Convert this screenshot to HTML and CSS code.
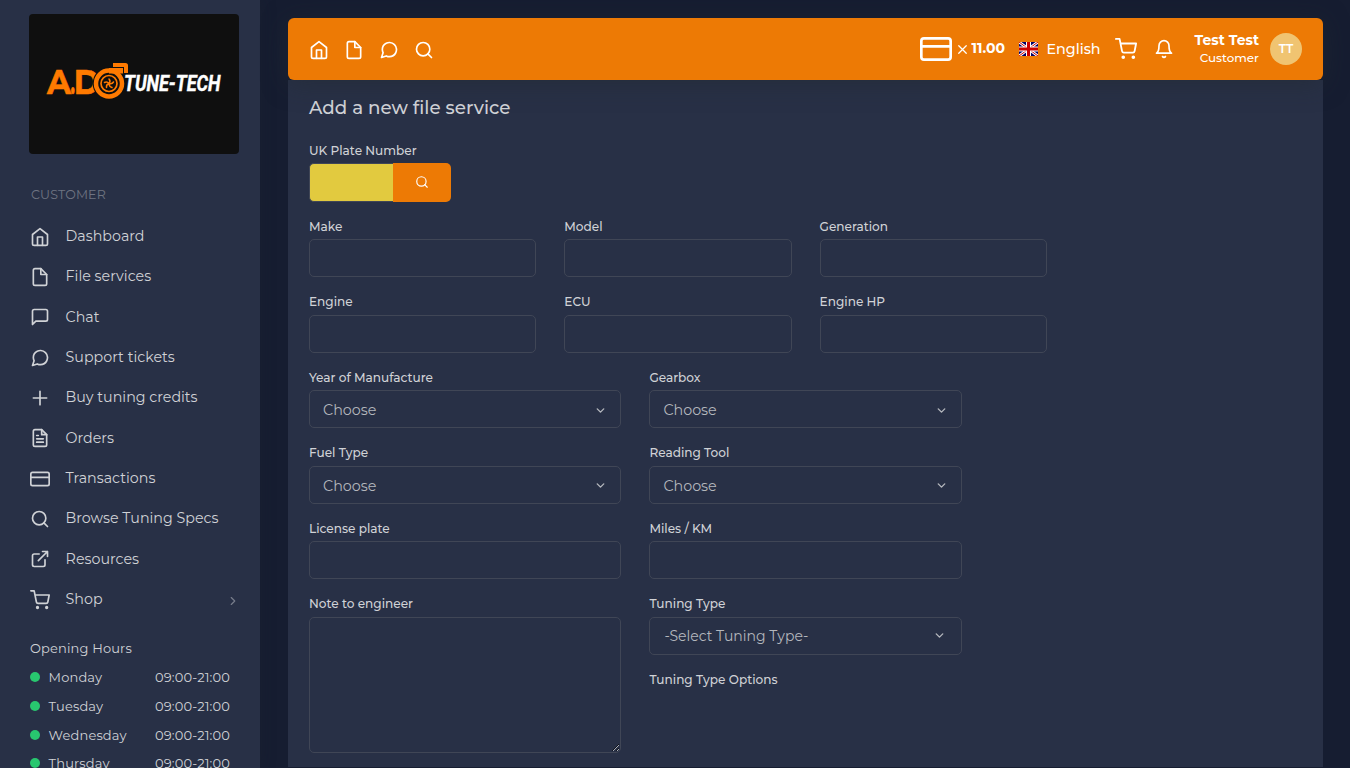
FILE: index.html
```html
<!DOCTYPE html>
<html lang="en">
<head>
    <meta charset="utf-8" />
    <title>Add a new file service</title>
    <link rel="stylesheet" href="styles.css">
</head>
<body>
    <!-- icon set -->
    <svg class="sprite" aria-hidden="true">
        <symbol id="i-home" viewBox="0 0 24 24"><path d="M3 9l9-7 9 7v11a2 2 0 0 1-2 2H5a2 2 0 0 1-2-2z"/><path d="M9 22V12h6v10"/></symbol>
        <symbol id="i-file" viewBox="0 0 24 24"><path d="M13 2H6a2 2 0 0 0-2 2v16a2 2 0 0 0 2 2h12a2 2 0 0 0 2-2V9z"/><path d="M13 2v7h7"/></symbol>
        <symbol id="i-chat" viewBox="0 0 24 24"><path d="M21 15a2 2 0 0 1-2 2H7l-4 4V5a2 2 0 0 1 2-2h14a2 2 0 0 1 2 2z"/></symbol>
        <symbol id="i-ticket" viewBox="0 0 24 24"><path d="M21 11.5a8.38 8.38 0 0 1-.9 3.8 8.5 8.5 0 0 1-7.6 4.7 8.38 8.38 0 0 1-3.8-.9L3 21l1.9-5.7a8.38 8.38 0 0 1-.9-3.8 8.5 8.5 0 0 1 4.7-7.6 8.38 8.38 0 0 1 3.8-.9h.5a8.48 8.48 0 0 1 8 8v.5z"/></symbol>
        <symbol id="i-plus" viewBox="0 0 24 24"><path d="M12 4v16M4 12h16"/></symbol>
        <symbol id="i-text" viewBox="0 0 24 24"><path d="M14 2H6a2 2 0 0 0-2 2v16a2 2 0 0 0 2 2h12a2 2 0 0 0 2-2V8z"/><path d="M14 2v6h6M16 13H8M16 17H8M10 9H8"/></symbol>
        <symbol id="i-card" viewBox="0 0 24 24"><rect x="1" y="4" width="22" height="16" rx="2"/><path d="M1 10h22"/></symbol>
        <symbol id="i-search" viewBox="0 0 24 24"><circle cx="11" cy="11" r="8"/><path d="M21 21l-4.35-4.35"/></symbol>
        <symbol id="i-link" viewBox="0 0 24 24"><path d="M18 13v6a2 2 0 0 1-2 2H5a2 2 0 0 1-2-2V8a2 2 0 0 1 2-2h6M15 3h6v6M10 14L21 3"/></symbol>
        <symbol id="i-cart" viewBox="0 0 24 24"><circle cx="9" cy="21" r="1"/><circle cx="20" cy="21" r="1"/><path d="M1 1h4l2.68 13.39a2 2 0 0 0 2 1.61h9.72a2 2 0 0 0 2-1.61L23 6H6"/></symbol>
        <symbol id="i-bell" viewBox="0 0 24 24"><path d="M18 8A6 6 0 0 0 6 8c0 7-3 9-3 9h18s-3-2-3-9M13.73 21a2 2 0 0 1-3.46 0"/></symbol>
        <symbol id="i-right" viewBox="0 0 24 24"><path d="M9 18l6-6-6-6"/></symbol>
        <symbol id="i-down" viewBox="0 0 24 24"><path d="M6 9l6 6 6-6"/></symbol>
        <symbol id="i-x" viewBox="0 0 24 24"><path d="M18 6L6 18M6 6l12 12"/></symbol>
    </svg>

    <div class="wrapper">
        <aside class="sidebar">
            <svg class="logo" viewBox="0 0 210 140">
                <rect width="210" height="140" rx="4" fill="#0f0f0f"/>
                <g class="logo-ad">
                    <text x="18" y="79.500" textLength="24" lengthAdjust="spacingAndGlyphs">A</text>
                    <text x="41.500" y="79.500" textLength="4.500" lengthAdjust="spacingAndGlyphs">.</text>
                    <text x="44.700" y="79.500" textLength="26" lengthAdjust="spacingAndGlyphs">D</text>
                </g>
                <circle cx="80" cy="69.500" r="16.300" fill="#0f0f0f"/>
                <path fill="#ff7a00" d="M80 54H94V59.500H80zM84 49H96.500Q99 49 99 51.500V59H95V53H84z"/>
                <circle cx="80" cy="69.500" r="13" fill="none" stroke="#ff7a00" stroke-width="4.500"/>
                <circle cx="80" cy="69.500" r="8" fill="none" stroke="#ff7a00" stroke-width="1.700"/>
                <g fill="none" stroke="#ff7a00" stroke-width="1.500" stroke-linecap="round">
                    <path d="M80 69.500Q82 67 80 65M80 69.500Q83 70.500 84.500 68M80 69.500Q80 72.500 83 73.500M80 69.500Q77 70.500 77.500 73.500M80 69.500Q78 67 75.500 68.500"/>
                </g>
                <text class="logo-tt" x="95" y="76.500" textLength="96.500" lengthAdjust="spacingAndGlyphs">TUNE-TECH</text>
            </svg>

            <div class="menu-title">CUSTOMER</div>
            <nav class="menu">
                <a><svg class="icon"><use href="#i-home"/></svg><span>Dashboard</span></a>
                <a><svg class="icon"><use href="#i-file"/></svg><span>File services</span></a>
                <a><svg class="icon"><use href="#i-chat"/></svg><span>Chat</span></a>
                <a><svg class="icon"><use href="#i-ticket"/></svg><span>Support tickets</span></a>
                <a><svg class="icon"><use href="#i-plus"/></svg><span>Buy tuning credits</span></a>
                <a><svg class="icon"><use href="#i-text"/></svg><span>Orders</span></a>
                <a><svg class="icon"><use href="#i-card"/></svg><span>Transactions</span></a>
                <a><svg class="icon"><use href="#i-search"/></svg><span>Browse Tuning Specs</span></a>
                <a><svg class="icon"><use href="#i-link"/></svg><span>Resources</span></a>
                <a><svg class="icon"><use href="#i-cart"/></svg><span>Shop</span><svg class="icon arrow"><use href="#i-right"/></svg></a>
            </nav>

            <div class="hours">
                <div class="hours-title">Opening Hours</div>
                <div class="day"><i class="dot"></i><span>Monday</span><span class="time">09:00-21:00</span></div>
                <div class="day"><i class="dot"></i><span>Tuesday</span><span class="time">09:00-21:00</span></div>
                <div class="day"><i class="dot"></i><span>Wednesday</span><span class="time">09:00-21:00</span></div>
                <div class="day"><i class="dot"></i><span>Thursday</span><span class="time">09:00-21:00</span></div>
            </div>
        </aside>

        <main class="content">
            <header class="navbar">
                <div class="shortcuts">
                    <svg class="icon"><use href="#i-home"/></svg>
                    <svg class="icon"><use href="#i-file"/></svg>
                    <svg class="icon"><use href="#i-ticket"/></svg>
                    <svg class="icon"><use href="#i-search"/></svg>
                </div>
                <div class="credits">
                    <svg class="icon credit-card"><use href="#i-card"/></svg>
                    <svg class="icon times"><use href="#i-x"/></svg>
                    <b>11.00</b>
                </div>
                <div class="language">
                    <svg class="flag" viewBox="0 0 19 14">
                        <rect width="19" height="14" fill="#006"/>
                        <path d="M0 0L19 14M19 0L0 14" stroke="#fff" stroke-width="2.800"/>
                        <path d="M0 0L19 14M19 0L0 14" stroke="#c00" stroke-width="1"/>
                        <path d="M9.500 0V14M0 7H19" stroke="#fff" stroke-width="5"/>
                        <path d="M9.500 0V14M0 7H19" stroke="#c00" stroke-width="3"/>
                    </svg>
                    <span>English</span>
                </div>
                <svg class="icon cart"><use href="#i-cart"/></svg>
                <svg class="icon bell"><use href="#i-bell"/></svg>
                <div class="user">
                    <b>Test Test</b>
                    <span>Customer</span>
                </div>
                <div class="avatar">TT</div>
            </header>

            <section class="card">
                <h4>Add a new file service</h4>
                <form>
                    <div class="field">
                        <label>UK Plate Number</label>
                        <div class="plate">
                            <input class="plate-input" type="text">
                            <button class="plate-button" type="button"><svg class="icon"><use href="#i-search"/></svg></button>
                        </div>
                    </div>

                    <div class="row three">
                        <div class="field"><label>Make</label><input class="control" type="text"></div>
                        <div class="field"><label>Model</label><input class="control" type="text"></div>
                        <div class="field"><label>Generation</label><input class="control" type="text"></div>
                        <div class="field"><label>Engine</label><input class="control" type="text"></div>
                        <div class="field"><label>ECU</label><input class="control" type="text"></div>
                        <div class="field"><label>Engine HP</label><input class="control" type="text"></div>
                    </div>

                    <div class="row two">
                        <div class="field"><label>Year of Manufacture</label><div class="control select"><span>Choose</span><svg class="icon"><use href="#i-down"/></svg></div></div>
                        <div class="field"><label>Gearbox</label><div class="control select"><span>Choose</span><svg class="icon"><use href="#i-down"/></svg></div></div>
                        <div class="field"><label>Fuel Type</label><div class="control select"><span>Choose</span><svg class="icon"><use href="#i-down"/></svg></div></div>
                        <div class="field"><label>Reading Tool</label><div class="control select"><span>Choose</span><svg class="icon"><use href="#i-down"/></svg></div></div>
                        <div class="field"><label>License plate</label><input class="control" type="text"></div>
                        <div class="field"><label>Miles / KM</label><input class="control" type="text"></div>
                        <div class="field"><label>Note to engineer</label><textarea class="control note"></textarea></div>
                        <div>
                            <div class="field"><label>Tuning Type</label><div class="control select tuning"><span>-Select Tuning Type-</span><svg class="icon"><use href="#i-down"/></svg></div></div>
                            <div class="field"><label>Tuning Type Options</label></div>
                        </div>
                    </div>
                </form>
            </section>
        </main>
    </div>
</body>
</html>
```
FILE: styles.css
```css
* {
    box-sizing: border-box;
}

body {
    margin: 0;
    height: 768px;
    overflow: hidden;
    background-color: #161d31;
    color: #d0d2d6;
    font-family: Montserrat, Inter, sans-serif;
    font-size: 14px;
}

.sprite {
    display: none;
}

.icon {
    width: 20px;
    height: 20px;
    flex: none;
    fill: none;
    stroke: currentColor;
    stroke-width: 2;
    stroke-linecap: round;
    stroke-linejoin: round;
}

.wrapper {
    display: flex;
    height: 768px;
}

/* sidebar */
.sidebar {
    width: 260px;
    flex: none;
    padding: 14px 20px 0 29px;
    background-color: #283046;
    box-shadow: 0 0 15px rgba(34, 41, 47, 0.3);
    overflow: hidden;
}

.logo {
    display: block;
    width: 210px;
    height: 140px;
}

.logo-ad {
    fill: #ff7a00;
    stroke: #ff7a00;
    stroke-width: 0.6px;
    font-size: 34px;
    font-weight: 700;
}

.logo-tt {
    fill: #fff;
    stroke: #fff;
    stroke-width: 0.4px;
    font-family: Roboto, sans-serif;
    font-size: 21.5px;
    font-weight: 700;
    font-style: italic;
}

.menu-title {
    margin: 31px 0 11px 2px;
    line-height: 20px;
    font-size: 12.6px;
    letter-spacing: 0.15px;
    color: #6f7482;
}

.menu a {
    display: flex;
    align-items: center;
    height: 40.35px;
    padding: 1px 0 0 1px;
    font-size: 14.25px;
}

.menu span {
    margin: -1.6px 0 0 15.6px;
}

.menu .arrow {
    width: 14px;
    height: 14px;
    margin-left: auto;
    margin-top: 2px;
    color: #777c8a;
}

.hours {
    margin: 18.5px 10px 0 1px;
    font-size: 13px;
    letter-spacing: 0.15px;
}

.hours-title {
    line-height: 20px;
    margin-bottom: 5px;
}

.day {
    display: flex;
    align-items: center;
    height: 28.7px;
}

.dot {
    width: 10px;
    height: 10px;
    margin-right: 8.6px;
    border-radius: 50%;
    background-color: #28c76f;
}

.time {
    margin-left: auto;
}

/* main */
.content {
    width: 1035px;
    margin: 18px 0 0 28px;
}

.navbar {
    position: relative;
    display: flex;
    align-items: center;
    height: 62px;
    padding: 0 21px;
    border-radius: 6px;
    background-color: #ed7a05;
    box-shadow: 0 4px 24px rgba(34, 41, 47, 0.5);
    color: #fff;
}

.shortcuts {
    display: flex;
    gap: 15px;
    margin: 1px auto 0 0;
}

.credits {
    display: flex;
    align-items: center;
    font-size: 14px;
}

.credits b {
    margin-top: -2px;
}

.credit-card {
    width: 32px;
    height: 32px;
}

.times {
    width: 15px;
    height: 15px;
    margin: 0 2px 0 3px;
}

.language {
    display: flex;
    align-items: center;
    margin: 0 14px;
    font-weight: 500;
    font-size: 14.3px;
}

.flag {
    width: 19px;
    height: 14px;
    margin-right: 8.5px;
}

.cart {
    width: 22px;
    height: 22px;
    margin-right: 17px;
}

.bell {
    margin-right: 21px;
}

.user {
    display: flex;
    flex-direction: column;
    align-items: flex-end;
    line-height: 18.5px;
}

.user span {
    font-size: 11.9px;
    font-weight: 500;
}

.avatar {
    width: 32px;
    height: 32px;
    margin-left: 11px;
    border-radius: 50%;
    background-color: #f0c471;
    line-height: 32px;
    text-align: center;
    font-size: 12px;
    font-weight: 600;
}

.card {
    height: 687px;
    padding: 17px 21px;
    background-color: #283046;
}

h4 {
    margin: 0 0 23.4px;
    line-height: 22px;
    font-size: 18.3px;
    font-weight: 500;
}

.field {
    margin-bottom: 16px;
}

label {
    display: block;
    margin-bottom: 3.5px;
    line-height: 18px;
    font-size: 12.1px;
    font-weight: 500;
}

.plate {
    display: flex;
    height: 39px;
    margin-top: -1px;
}

.plate-input {
    width: 84px;
    height: 39px;
    border: 1px solid #404656;
    border-right: 0;
    border-radius: 5px 0 0 5px;
    background-color: #e2ca3f;
}

.plate-button {
    display: flex;
    align-items: center;
    justify-content: center;
    width: 58px;
    height: 39px;
    border: 0;
    border-radius: 0 5px 5px 0;
    background-color: #ed7a05;
    color: #fff;
}

.plate-button .icon {
    width: 14px;
    height: 14px;
}

.row {
    display: grid;
    column-gap: 28px;
}

.three {
    grid-template-columns: repeat(3, 227.3px);
}

.two {
    grid-template-columns: repeat(2, 312.4px);
}

.control {
    display: block;
    width: 100%;
    height: 38px;
    border: 1px solid #404656;
    border-radius: 5px;
    background-color: transparent;
    color: #b4b7bd;
}

.select {
    display: flex;
    align-items: center;
    justify-content: space-between;
    padding: 2px 13px 0;
    font-size: 14.3px;
}

.select .icon {
    width: 13px;
    height: 13px;
    stroke-width: 2.6;
}

.tuning {
    padding: 0 15px 0 14px;
    font-size: 14px;
}

.note {
    height: 136px;
}
```
